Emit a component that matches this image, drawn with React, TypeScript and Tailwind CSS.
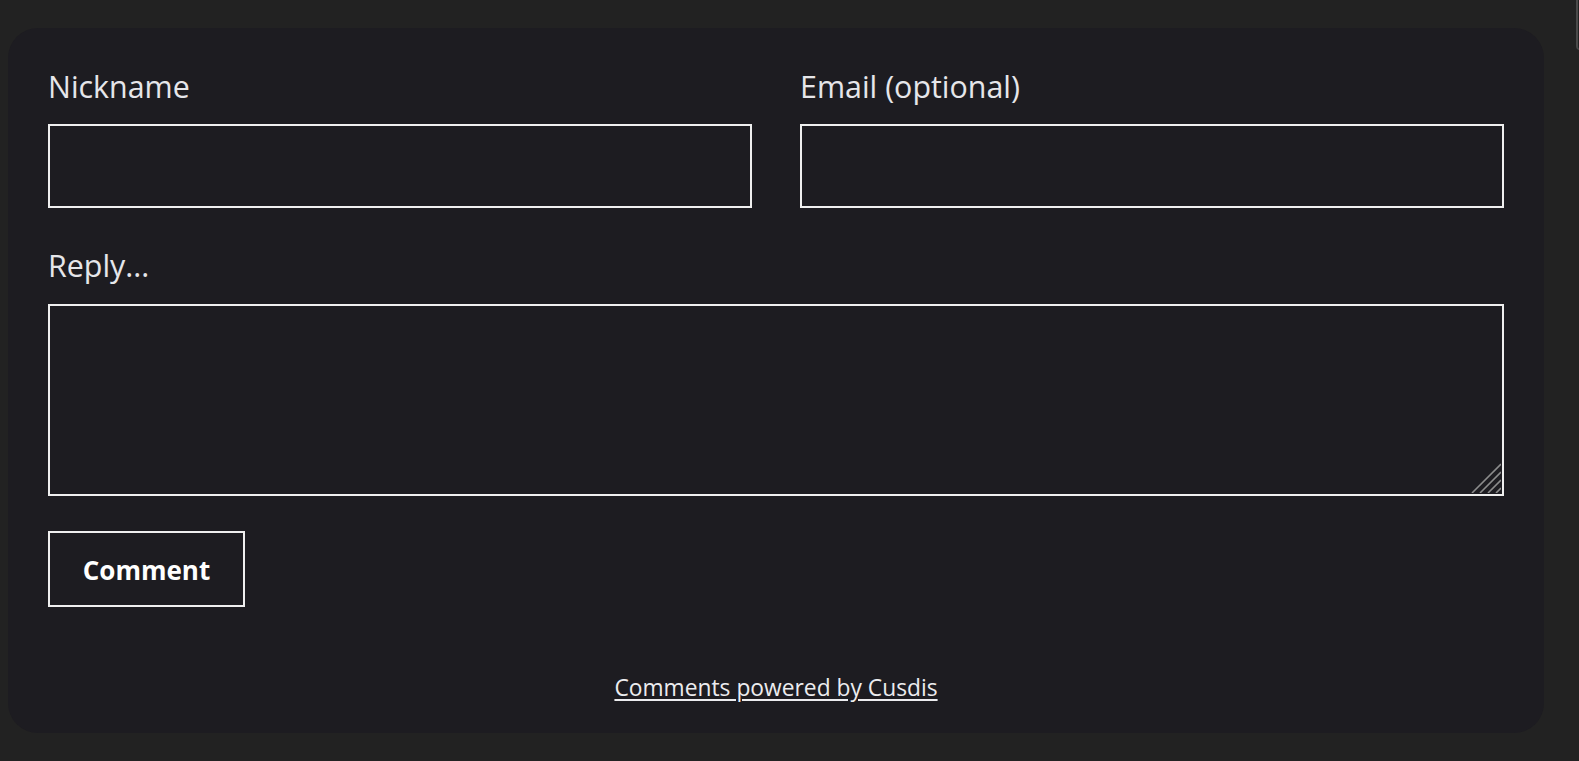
import React from "react";

export default function App() {
  return (
    <div
      className="relative w-[1579px] h-[761px] overflow-hidden bg-[#222222]"
      style={{ fontFamily: '"Open Sans", "Noto Sans", sans-serif' }}
    >
      <div className="absolute left-[1576px] top-[-12px] w-[8px] h-[62px] rounded-bl-[4px] border-l-2 border-b border-[#4a4a4a]" />
      <div className="ml-[8px] mt-[28px] w-[1536px] h-[705px] rounded-[30px] bg-[#1d1c21] px-[40px] pt-[39px] flex flex-col">
        <div className="grid grid-cols-2 gap-x-[48px]">
          <div className="flex flex-col">
            <label className="h-[40px] leading-[40px] text-[30.4px] text-[#e6e6ea] mb-[17px]">Nickname</label>
            <input className="h-[84px] border-2 border-[#efefef] bg-transparent outline-none" />
          </div>
          <div className="flex flex-col">
            <label className="h-[40px] leading-[40px] text-[30.4px] text-[#e6e6ea] mb-[17px]">Email (optional)</label>
            <input className="h-[84px] border-2 border-[#efefef] bg-transparent outline-none" />
          </div>
        </div>
        <label className="mt-[38px] h-[40px] leading-[40px] text-[30.4px] text-[#e6e6ea] mb-[18px]">Reply...</label>
        <div className="relative h-[192px] border-2 border-[#efefef]">
          <textarea className="w-full h-full resize-none bg-transparent outline-none" />
          <svg className="absolute right-[1px] bottom-[1px]" width="30" height="30" viewBox="0 0 30 30">
            <g stroke="#8c8c8c" strokeWidth="1.6">
              <line x1="30" y1="1" x2="1" y2="30" />
              <line x1="30" y1="9" x2="9" y2="30" />
              <line x1="30" y1="17" x2="17" y2="30" />
              <line x1="30" y1="25" x2="25" y2="30" />
            </g>
          </svg>
        </div>
        <div className="mt-[35px]">
          <button className="w-[197px] h-[76px] border-2 border-[#efefef] text-white font-bold text-[26px] flex items-center justify-center pt-[2px]">
            Comment
          </button>
        </div>
        <div className="mt-[65px] flex justify-center">
          <a href="#" className="text-[22.8px] leading-[32px] text-[#ececef] underline underline-offset-[3px]">
            Comments powered by Cusdis
          </a>
        </div>
      </div>
    </div>
  );
}
